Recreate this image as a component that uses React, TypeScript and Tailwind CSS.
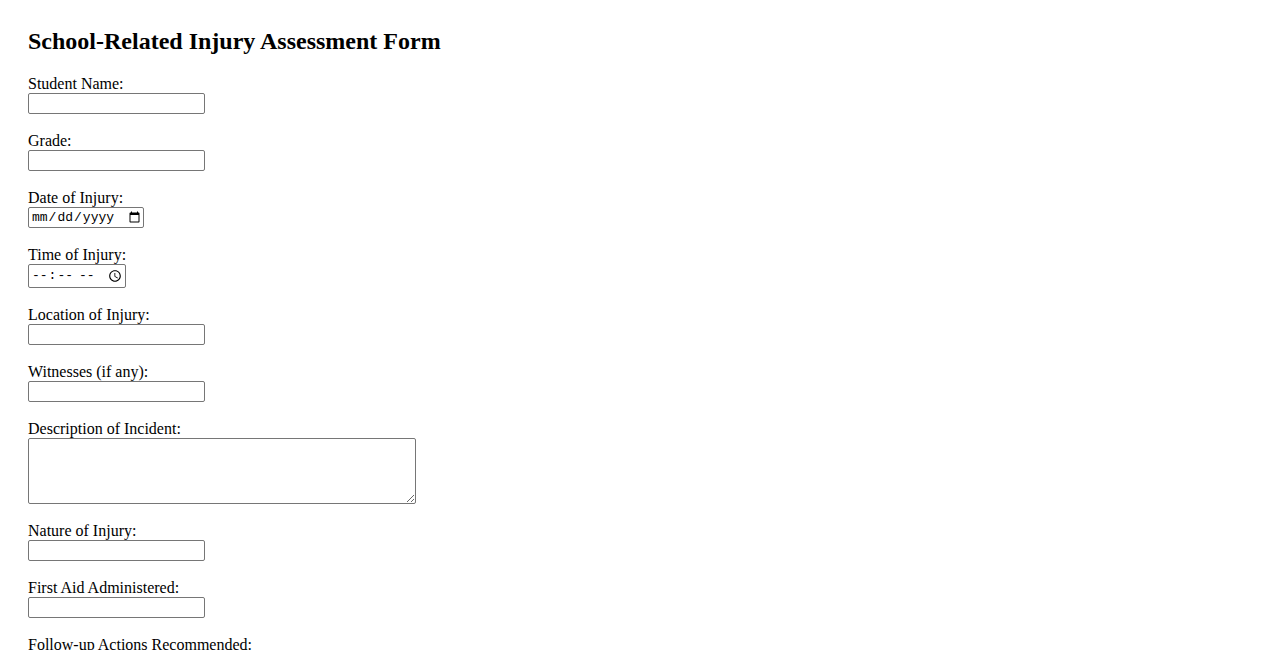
const textFields = [
  { id: "studentName", label: "Student Name:" },
  { id: "grade", label: "Grade:" },
];

const Field = ({ label, children }: { label: string; children: React.ReactNode }) => (
  <div className="mb-[18px] flex flex-col items-start">
    <label className="block text-[16px] leading-[18px]">{label}</label>
    {children}
  </div>
);

const TextInput = () => (
  <input
    type="text"
    className="h-[21px] w-[177px] rounded-[2px] border border-[#767676] bg-white px-[2px] text-[13px] font-['Liberation_Sans',sans-serif]"
  />
);

export default function App() {
  return (
    <div className="min-h-screen bg-white px-[28px] pt-[27px] font-['Liberation_Serif',serif] text-black">
      <h2 className="mb-[20px] text-[24px] leading-[28px] font-bold">
        School-Related Injury Assessment Form
      </h2>

      <form>
        {textFields.map((f) => (
          <Field key={f.id} label={f.label}>
            <TextInput />
          </Field>
        ))}

        <Field label="Date of Injury:">
          <input
            type="date"
            className="h-[21px] w-[116px] rounded-[2px] border border-[#767676] bg-white pl-[2px] text-[13px] font-['Liberation_Mono',monospace]"
          />
        </Field>

        <Field label="Time of Injury:">
          <input
            type="time"
            className="h-[24px] w-[98px] rounded-[2px] border border-[#767676] bg-white pl-[2px] text-[13px] font-['Liberation_Mono',monospace]"
          />
        </Field>

        <Field label="Location of Injury:">
          <TextInput />
        </Field>

        <Field label="Witnesses (if any):">
          <TextInput />
        </Field>

        <Field label="Description of Incident:">
          <textarea className="h-[66px] w-[388px] rounded-[2px] border border-[#767676] bg-white px-[2px] text-[13px] font-['Liberation_Mono',monospace]" />
        </Field>

        <Field label="Nature of Injury:">
          <TextInput />
        </Field>

        <Field label="First Aid Administered:">
          <TextInput />
        </Field>

        <Field label="Follow-up Actions Recommended:">
          <textarea className="h-[66px] w-[388px] rounded-[2px] border border-[#767676] bg-white px-[2px] text-[13px] font-['Liberation_Mono',monospace]" />
        </Field>
      </form>
    </div>
  );
}
